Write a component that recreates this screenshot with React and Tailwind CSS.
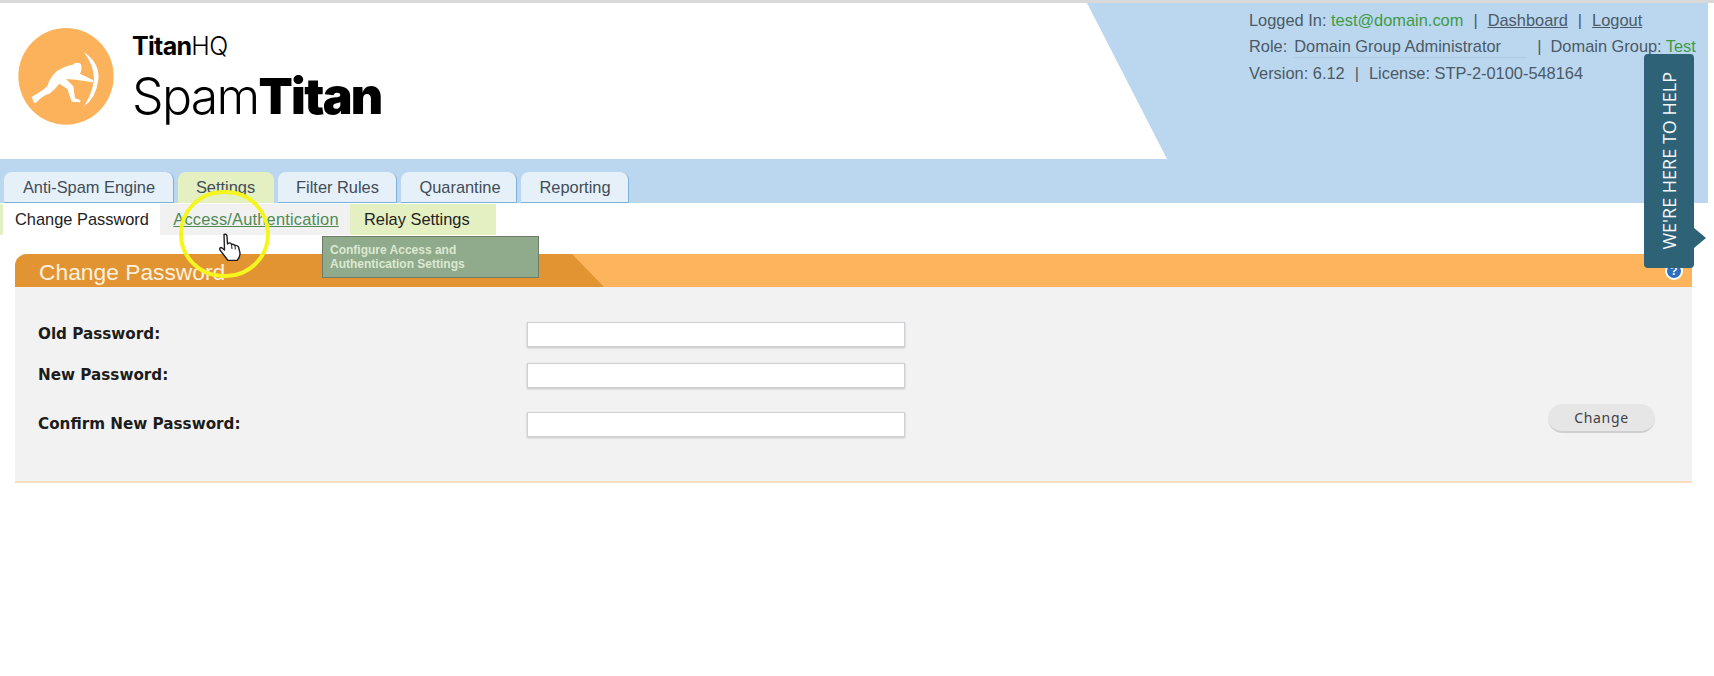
import React from "react";

const tabs = [
  { label: "Anti-Spam Engine", w: "w-[170px] pl-px" },
  { label: "Settings", w: "w-[96px]", active: true },
  { label: "Filter Rules", w: "w-[119px] pl-px" },
  { label: "Quarantine", w: "w-[116px] pl-[3px]" },
  { label: "Reporting", w: "w-[108px] pl-px" },
];

function Logo() {
  return (
    <svg viewBox="0 0 360 330" className="w-[120px] h-[110px] shrink-0">
      <ellipse cx="168" cy="160" rx="143" ry="145" fill="#fbb25b" />
      <path
        d="M65 222 L72 240 L80 238 Q100 215 118 212 Q135 200 148 182 L172 198 L185 236 L210 238 L212 232 L195 226 L190 190 L168 168 L198 170 L248 178 L250 172 L210 152 Q218 135 212 122 Q198 115 188 125 Q160 130 140 145 Q118 165 112 190 Q95 205 65 222Z"
        fill="#fff"
      />
      <path d="M222 88 Q270 120 265 170 Q258 225 222 250 Q250 205 252 165 Q250 125 222 88Z" fill="#fff" />
    </svg>
  );
}

function Row({ label, className }) {
  return (
    <div className={`flex items-center h-[25px] ${className}`}>
      <label className="w-[512px] pl-[23px] font-['DejaVu_Sans',sans-serif] font-bold text-[15.2px] text-[#1c1c1c]">
        {label}
      </label>
      <input
        type="password"
        className="w-[378px] h-[25px] bg-white border border-[#cfcfd4] shadow-[0_1px_2px_rgba(0,0,0,0.2)]"
      />
    </div>
  );
}

export default function App() {
  return (
    <div className="relative w-[1714px] h-[676px] overflow-hidden bg-white font-['Liberation_Sans',sans-serif]">
      <div className="h-[3px] bg-[#d9d9d9]" />

      <header className="w-[1708px] h-[200px] bg-[#bad7ef] flex flex-col justify-between">
        <div className="flex h-[156px]">
          <div className="w-[1167px] h-[156px] bg-white [clip-path:polygon(0_0,1087px_0,100%_100%,0_100%)] flex items-start pl-[10px] pt-[20px]">
            <Logo />
            <div className="ml-[2px] font-['Inter',sans-serif] text-black">
              <div className="text-[25px] leading-[30px] mt-[8px] tracking-[-0.7px]">
                <span className="font-bold">Titan</span>
                <span className="font-light">HQ</span>
              </div>
              <div className="text-[50px] leading-[60px] mt-[5px] tracking-[-1.7px] whitespace-nowrap">
                <span className="font-light">Spam</span>
                <span className="font-black">Titan</span>
              </div>
            </div>
          </div>
          <div className="ml-[82px] text-[16.4px] text-[#4b5a66] whitespace-nowrap pt-[6px]">
            <div className="h-[24px] leading-[22px]">
              Logged In: <span className="text-[#3f9a45]">test@domain.com</span>
              <span className="mx-[10px]">|</span>
              <a className="underline">Dashboard</a>
              <span className="mx-[10px]">|</span>
              <a className="underline">Logout</a>
            </div>
            <div className="h-[26px] leading-[26px] flex">
              <span>Role:</span>
              <span className="ml-[7px] w-[233px] border-b border-[#aecbe3] h-[25px]">Domain Group Administrator</span>
              <span className="ml-[10px]">|</span>
              <span className="ml-[9px]">Domain Group: </span>
              <span className="ml-[4px] text-[#3f9a45]">Test</span>
            </div>
            <div className="h-[26px] leading-[29px]">
              Version: 6.12<span className="mx-[10px]">|</span>License: STP-2-0100-548164
            </div>
          </div>
        </div>
        <nav className="flex gap-[4px] pl-[4px] h-[31px]">
          {tabs.map((t) => (
            <div
              key={t.label}
              className={`${t.w} rounded-t-[8px] flex items-center justify-center text-[16.4px] text-[#414c56] border-b border-r ${
                t.active ? "bg-[#e4efc2] border-[#e4efc2]" : "bg-[#e6f0f9] border-[#7fb0d8]"
              }`}
            >
              {t.label}
            </div>
          ))}
        </nav>
      </header>

      <div className="flex h-[32px] text-[16.4px] text-[#222] pt-px">
        <div className="w-[160px] pl-[15px] flex items-center border-l-[3px] border-[#e4efc2]">
          <span className="-ml-[3px]">Change Password</span>
        </div>
        <div className="w-[190px] bg-[#f1f1f1] flex items-center justify-center pl-[2px] text-[#4f8a55] underline tracking-[0.2px]">
          Access/Authentication
        </div>
        <div className="w-[146px] bg-[#e4efc2] flex items-center pl-[14px]">Relay Settings</div>
      </div>

      <main className="ml-[15px] w-[1677px] mt-[19px]">
        <div className="relative h-[33px] bg-[#fdb45c] rounded-tl-[12px] overflow-hidden flex justify-end items-center pr-[9px]">
          <div className="absolute left-0 top-0 bottom-0 w-[589px] bg-[#e29433] [clip-path:polygon(0_0,557px_0,100%_100%,0_100%)] flex items-center pl-[24px] pt-[3px] text-[22.8px] text-[#fdf1de]">
            Change Password
          </div>
          <div className="w-[18px] h-[18px] rounded-full bg-[#2a6fc0] border-2 border-white flex items-center justify-center text-white text-[12px] font-bold leading-none">
            ?
          </div>
        </div>
        <div className="h-[196px] bg-[#f2f2f2] border-b-2 border-[#f9dfbd] flex justify-between items-start pr-[37px]">
          <div className="pt-[35px]">
            <Row label="Old Password:" />
            <Row label="New Password:" className="mt-[16px]" />
            <Row label="Confirm New Password:" className="mt-[24px]" />
          </div>
          <button className="mt-[117px] w-[107px] h-[29px] rounded-full bg-[#e6e6e6] border-b-2 border-[#cfcfcf] text-[14px] text-[#3f3f47] tracking-[0.7px] font-['Noto_Sans',sans-serif]">
            Change
          </button>
        </div>
      </main>

      {/* Tooltip over the page */}
      <div className="absolute left-[322px] top-[236px] w-[217px] h-[42px] bg-[#8fab8b] border border-[#6d7d69] pl-[7px] pt-[6px] text-[12px] leading-[14px] font-bold text-[#dde8d2]">
        Configure Access and
        <br />
        Authentication Settings
      </div>

      {/* Screen-recording highlight and pointer */}
      <div className="absolute left-[179px] top-[190px] w-[91px] h-[88px] rounded-full border-[4px] border-[#f5f520]" />
      <svg viewBox="0 0 24 28" className="absolute left-[218px] top-[233px] w-[24px] h-[28px]">
        <path
          d="M6 1.5 Q8.5 0.5 9 3 L9.5 11 L11 10 Q13 9.5 13.5 11.5 Q15.5 10.5 17 12.5 Q19 12 20.5 14 L22 20 Q22 25 19 27.5 L10 27.5 L2 17 Q1 14.5 3.5 14.5 L6.5 17 Z"
          fill="#fff"
          stroke="#222"
          strokeWidth="1.4"
          strokeLinejoin="round"
        />
        <path d="M13.5 11.5 L14 16 M17 12.5 L17.3 16.5" stroke="#222" strokeWidth="1" fill="none" />
      </svg>

      {/* Help widget */}
      <div className="absolute left-[1644px] top-[54px] w-[50px] h-[214px] rounded-[4px] bg-[#2e6277] flex items-center justify-center">
        <span className="[writing-mode:vertical-rl] rotate-180 font-['Open_Sans',sans-serif] font-medium text-[18px] text-[#f2f6f8] whitespace-nowrap">
          WE'RE HERE TO HELP
        </span>
        <div className="absolute left-full top-[174px] w-0 h-0 border-y-[10px] border-y-transparent border-l-[12px] border-l-[#2e6277]" />
      </div>
    </div>
  );
}
